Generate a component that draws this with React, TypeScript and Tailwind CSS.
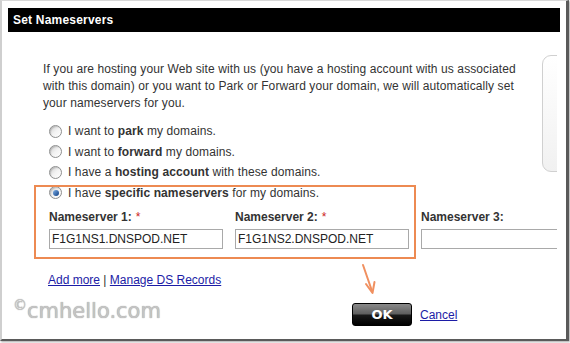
import React from "react";

const font = { fontFamily: '"Liberation Sans", Arial, sans-serif' };

function Radio({ checked }: { checked?: boolean }) {
  return (
    <span className="relative inline-flex h-[13px] w-[13px] shrink-0 items-center justify-center rounded-full border border-[#8e8f8f] bg-gradient-to-br from-[#cfcfcf] via-[#f2f2f2] to-white shadow-[inset_1px_1px_1px_rgba(0,0,0,0.15)]">
      {checked && (
        <span className="h-[6px] w-[6px] rounded-full bg-gradient-to-br from-[#7fb0e6] to-[#0d3f84]" />
      )}
    </span>
  );
}

function RadioRow({ children, checked }: { children: React.ReactNode; checked?: boolean }) {
  return (
    <div className="flex h-[20.5px] items-center pl-[6px]">
      <Radio checked={checked} />
      <span className="ml-[6px] tracking-[0.1px] text-[#333]">{children}</span>
    </div>
  );
}

export default function App() {
  return (
    <div className="relative h-[343px] w-[570px] overflow-hidden bg-white text-[12px]" style={font}>
      <div className="relative h-[341px] w-[569px] border-l-2 border-t border-b-2 border-r-[3px] border-l-[#cfcfcf] border-t-[#d8d8d8] border-r-[#5a5a5a] border-b-[#5a5a5a] bg-white shadow-[1px_1px_2px_rgba(0,0,0,0.35)]">
        <div className="ml-[6px] mt-[7px] h-[24px] w-[552px] bg-black pl-[5px] text-[12px] font-bold leading-[24px] text-white tracking-[0.2px]">
          Set Nameservers
        </div>
        <div className="relative w-[555px] overflow-hidden pl-[41px]">
          <div className="absolute left-[540px] top-[23px] h-[117px] w-[40px] rounded-l-[9px] border border-[#d0d0d0] bg-gradient-to-b from-white to-[#f1f1f1]" />
          <p className="mt-[29px] leading-[17px] tracking-[0.1px] text-[#333]">
            If you are hosting your Web site with us (you have a hosting account with us associated
            <br />
            with this domain) or you want to Park or Forward your domain, we will automatically set
            <br />
            your nameservers for you.
          </p>
          <div className="mt-[9px]">
            <RadioRow>
              I want to <b>park</b> my domains.
            </RadioRow>
            <RadioRow>
              I want to <b>forward</b> my domains.
            </RadioRow>
            <RadioRow>
              I have a <b>hosting account</b> with these domains.
            </RadioRow>
            <RadioRow checked>
              I have <b>specific nameservers</b> for my domains.
            </RadioRow>
          </div>
          <div className="ml-[6px] mt-[6px] flex gap-[12px]">
            {[
              { label: "Nameserver 1:", req: true, val: "F1G1NS1.DNSPOD.NET" },
              { label: "Nameserver 2:", req: true, val: "F1G1NS2.DNSPOD.NET" },
              { label: "Nameserver 3:", req: false, val: "" },
            ].map((f) => (
              <div key={f.label} className="w-[174px] shrink-0">
                <div className="h-[16px] font-bold leading-[16px] text-[#333]">
                  {f.label}
                  {f.req && <span className="ml-[4px] font-normal text-[#cc2222]">*</span>}
                </div>
                <div className="mt-[4px] h-[20px] w-full border border-[#a9a9a9] bg-white pl-[2px] text-[12px] leading-[18px] text-[#222]">
                  {f.val}
                </div>
              </div>
            ))}
          </div>
          <div className="ml-[5px] mt-[23px] h-[16px] leading-[16px] text-[#333]">
            <a className="text-[#1c1ca6] underline">Add more</a> |{" "}
            <a className="text-[#1c1ca6] underline">Manage DS Records</a>
          </div>
          <div className="ml-[309px] mt-[15px] flex items-center">
            <div className="flex h-[23px] w-[60px] items-center justify-center rounded-[3px] border border-black bg-[linear-gradient(to_bottom,#8a8a8a_0%,#5e5e5e_48%,#1a1a1a_52%,#000_100%)] text-[13px] font-bold text-white" style={{ fontFamily: '"DejaVu Sans", Verdana, sans-serif' }}>
              OK
            </div>
            <a className="ml-[8px] text-[#1c1ca6] underline">Cancel</a>
          </div>
        </div>
      </div>

      {/* orange highlight box */}
      <div className="pointer-events-none absolute left-[34px] top-[185px] h-[74px] w-[382px] border-2 border-[#ed8a52]" />

      {/* arrow */}
      <svg className="pointer-events-none absolute left-[355px] top-[262px]" width="30" height="36" viewBox="0 0 30 36">
        <line x1="8" y1="3" x2="17" y2="29" stroke="#f09060" strokeWidth="2" strokeLinecap="round" />
        <path d="M11 22 L17.5 31 L19.5 20" fill="none" stroke="#f09060" strokeWidth="2" strokeLinecap="round" strokeLinejoin="round" />
      </svg>

      {/* watermark */}
      <div
        className="pointer-events-none absolute left-[13px] top-[298px] flex items-start text-[#c4c4c4]"
        style={{ fontFamily: '"DejaVu Sans", Verdana, sans-serif', textShadow: "0 0 1px #8f8f8f" }}
      >
        <span className="text-[14px] leading-[14px]">©</span>
        <span className="text-[21px] leading-[26px]">cmhello.com</span>
      </div>
    </div>
  );
}
